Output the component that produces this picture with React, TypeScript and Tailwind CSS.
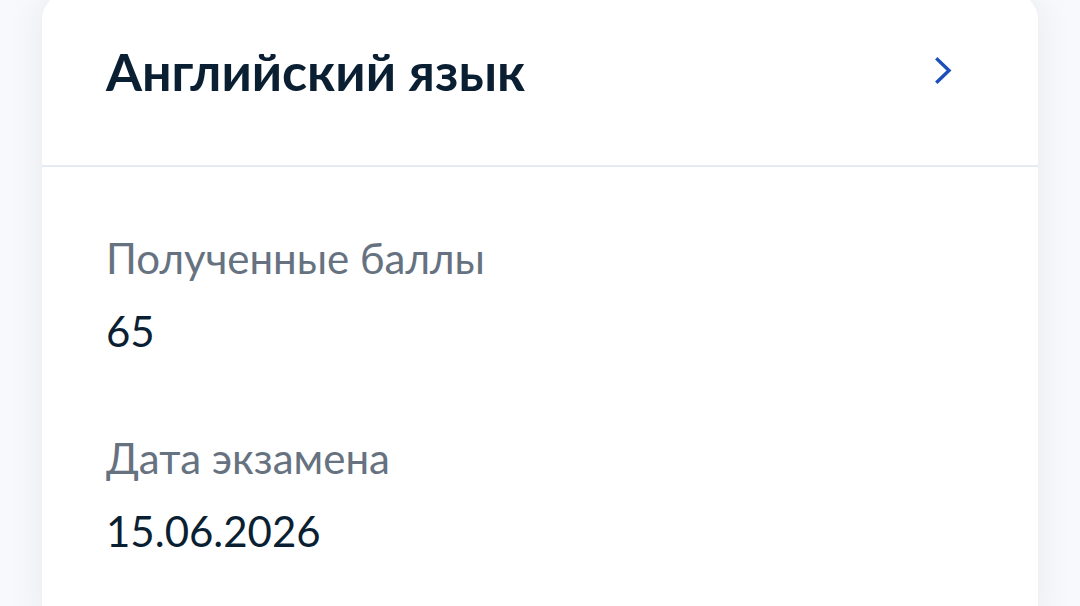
import { ReactNode } from 'react'

const font = { fontFamily: 'Lato, "Noto Sans", sans-serif' }

function Field({ label, value, first }: { label: string; value: ReactNode; first?: boolean }) {
  return (
    <div className={first ? '' : 'mt-[71px]'}>
      <p className="text-[42px] leading-[56px] text-[#66727f]">{label}</p>
      <p className="mt-[17px] text-[42px] leading-[56px] text-[#0b1f33]">{value}</p>
    </div>
  )
}

export default function App() {
  return (
    <div className="min-h-[606px] h-[606px] overflow-hidden bg-[#f7f9fc] px-[42px]" style={font}>
      <div className="-mt-2 rounded-[28px] bg-white shadow-[0_0_40px_rgba(11,31,51,0.07)] min-h-[640px]">
        {/* Header: title + chevron */}
        <div className="flex items-center justify-between pl-16 pr-[86px] pt-[47px] pb-[62px] border-b-2 border-[#e4ebf3]">
          <h1 className="text-[52px] leading-[64px] font-bold text-[#0b1f33]">Английский язык</h1>
          <svg width="17" height="27" viewBox="0 0 17 27" fill="none" className="-mt-[2px]">
            <polyline
              points="2.5,2.5 14,13.5 2.5,24.5"
              stroke="#1d4fbb"
              strokeWidth="3.4"
              strokeLinecap="square"
              strokeLinejoin="miter"
            />
          </svg>
        </div>

        {/* Body */}
        <div className="pl-16 pt-[63px]">
          <Field first label="Полученные баллы" value="65" />
          <Field label="Дата экзамена" value="15.06.2026" />
        </div>
      </div>
    </div>
  )
}
